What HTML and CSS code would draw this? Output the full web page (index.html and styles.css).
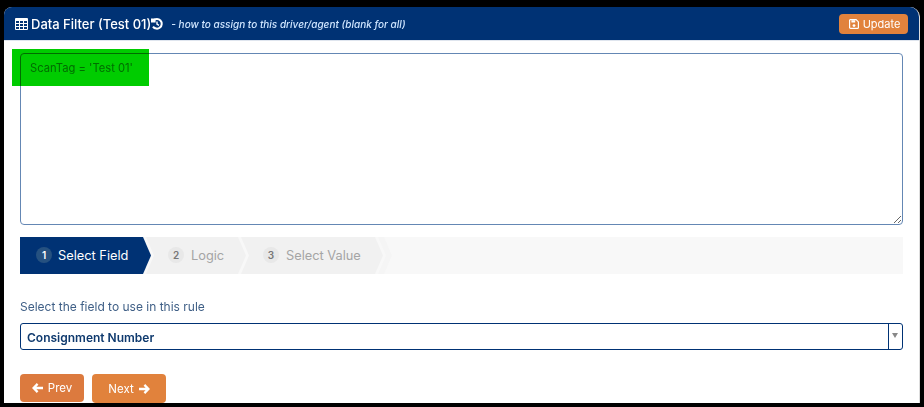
FILE: index.html
```html
<!DOCTYPE html>
<html lang="en">
<head>
    <meta charset="UTF-8">
    <meta name="viewport" content="width=device-width, initial-scale=1.0">
    <title>Data Filter</title>
    <link rel="stylesheet" href="styles.css">
</head>
<body>
    <div class="panel">
        <header class="panel-head">
            <div class="panel-title">
                <svg class="icon-table" width="13" height="12" viewBox="0 0 13 12">
                    <path fill="#fff" fill-rule="evenodd" d="M1 0h11a1 1 0 0 1 1 1v10a1 1 0 0 1-1 1H1a1 1 0 0 1-1-1V1a1 1 0 0 1 1-1zM1 3v2h3V3zm4 0v2h3V3zm4 0v2h3V3zM1 6v2h3V6zm4 0v2h3V6zm4 0v2h3V6zM1 9v2h3V9zm4 0v2h3V9zm4 0v2h3V9z"/>
                </svg>
                <span class="title-text">Data Filter (Test 01)</span>
                <svg class="icon-history" width="12" height="12" viewBox="0 0 12 12">
                    <path fill="none" stroke="#fff" stroke-width="2" d="M2.4 2.6A4.8 4.8 0 1 1 2 8.6"/>
                    <path fill="#fff" d="M0 0.4 L4.6 0.4 L4.6 4.6 L0 4.6z"/>
                    <path fill="none" stroke="#fff" stroke-width="1.4" d="M6 3.4V6.2L8 7.4"/>
                </svg>
                <span class="title-hint">- how to assign to this driver/agent (blank for all)</span>
            </div>
            <button class="btn btn-small">
                <svg width="10" height="10" viewBox="0 0 10 10">
                    <path fill="none" stroke="#fff" stroke-width="1.2" d="M1.2 0.6h5.9L9.4 2.9V8.4a1 1 0 0 1-1 1H1.6a1 1 0 0 1-1-1V1.2z"/>
                    <path fill="#fff" d="M2.4 1.2h3.8v2.4H2.4z"/>
                    <circle cx="5" cy="6.6" r="1.4" fill="#fff"/>
                </svg>
                Update
            </button>
        </header>

        <div class="panel-body">
            <div class="filter-box">
                <textarea class="filter-text" spellcheck="false">ScanTag = 'Test 01'</textarea>
                <div class="redact"></div>
            </div>

            <div class="steps">
                <div class="step step-1 active"><span class="num">1</span>Select Field</div>
                <div class="step step-2"><span class="num">2</span>Logic</div>
                <div class="step step-3"><span class="num">3</span>Select Value</div>
                <div class="step step-rest"></div>
            </div>

            <label class="field-label">Select the field to use in this rule</label>
            <div class="select">
                <span class="select-value">Consignment Number</span>
                <span class="select-arrow"></span>
            </div>

            <div class="actions">
                <button class="btn btn-prev">
                    <svg width="11" height="10" viewBox="0 0 11 10"><path fill="none" stroke="#fff" stroke-width="2.3" d="M5.6 0.9L1.6 5l4 4.1M2 5h9"/></svg>
                    Prev
                </button>
                <button class="btn btn-next">
                    Next
                    <svg width="11" height="10" viewBox="0 0 11 10"><path fill="none" stroke="#fff" stroke-width="2.3" d="M5.4 0.9L9.4 5l-4 4.1M9 5H0"/></svg>
                </button>
            </div>
        </div>
    </div>
</body>
</html>
```

FILE: styles.css
```css
html, body {
    height: 100%;
}

body {
    margin: 0;
    background-color: #000;
    font-family: Inter, "Liberation Sans", sans-serif;
    overflow: hidden;
    box-sizing: border-box;
    padding: 7px 4px 4px 4px;
}

.panel {
    height: 396px;
    background-color: #fff;
    border-right: 1px solid #ddd;
    border-radius: 8px 10px 0 0;
    overflow: hidden;
}

.panel-head {
    height: 33px;
    background-color: #003274;
    border-bottom: 1px solid #dfe5ee;
    display: flex;
    justify-content: space-between;
    align-items: center;
    padding: 0 11px 0 11px;
    color: #fff;
}

.panel-title {
    display: flex;
    align-items: center;
}

.icon-table {
    margin-right: 3px;
}

.title-text {
    font-size: 13px;
    font-weight: 500;
}

.icon-history {
    margin-right: 8px;
}

.title-hint {
    font-size: 10px;
    font-style: italic;
    font-weight: 500;
    color: #cfe6ff;
}

.btn {
    border: none;
    border-radius: 4px;
    background-color: #e1823c;
    color: #fff;
    font-family: inherit;
    font-size: 11px;
    font-weight: 400;
    display: flex;
    align-items: center;
    justify-content: center;
    gap: 5px;
    padding: 0;
}

.btn-small {
    width: 69px;
    height: 20px;
    gap: 4px;
    padding-left: 2px;
}

.panel-body {
    padding: 12px 16px 0 16px;
}

.filter-box {
    position: relative;
    height: 172px;
}

.filter-text {
    display: block;
    box-sizing: border-box;
    width: 100%;
    height: 172px;
    margin: 0;
    padding: 7px 9px;
    border: 1px solid #6487b4;
    border-radius: 4px;
    color: #888;
    font-family: inherit;
    font-size: 11.2px;
    outline: none;
}

/* green marker laid over the box, border and text show through */
.redact {
    position: absolute;
    left: -8px;
    top: -4px;
    width: 137px;
    height: 37px;
    background-color: #00cc00;
    mix-blend-mode: multiply;
}

.steps {
    display: flex;
    height: 37px;
    margin-top: 12px;
    background-color: #f8f8f8;
}

.step {
    display: flex;
    align-items: center;
    font-size: 12.8px;
    padding-bottom: 1px;
    background-color: #f1f1f1;
    color: #a5a5a5;
    margin-right: -5px;
    clip-path: polygon(0 0, calc(100% - 8px) 0, 100% 50%, calc(100% - 8px) 100%, 0 100%, 8px 50%);
}

.step-1 {
    width: 131px;
    padding-left: 16px;
    box-sizing: border-box;
    clip-path: polygon(0 0, calc(100% - 8px) 0, 100% 50%, calc(100% - 8px) 100%, 0 100%);
}

.step-2 {
    width: 100px;
    padding-left: 22px;
    box-sizing: border-box;
}

.step-3 {
    width: 142px;
    padding-left: 22px;
    box-sizing: border-box;
}

.step-rest {
    width: 14px;
    background-color: #f5f5f5;
}

.step.active {
    background-color: #003274;
    color: #fff;
}

.num {
    width: 16px;
    height: 16px;
    border-radius: 50%;
    background-color: #e8e8e8;
    color: #777;
    font-size: 10px;
    font-weight: 600;
    display: flex;
    align-items: center;
    justify-content: center;
    margin-right: 7px;
}

.active .num {
    background-color: #255180;
    color: #fff;
    margin-right: 6px;
}

.field-label {
    display: block;
    margin-top: 25px;
    font-size: 12px;
    line-height: 16px;
    color: #3f5f86;
}

.select {
    box-sizing: border-box;
    height: 27px;
    margin-top: 8px;
    border: 1px solid #003274;
    border-radius: 3px;
    display: flex;
    justify-content: space-between;
    align-items: stretch;
}

.select-value {
    padding-left: 6px;
    font-size: 12px;
    font-weight: 600;
    line-height: 27px;
    color: #0f3a6e;
}

.select-arrow {
    width: 13px;
    border-left: 1px solid #003274;
    position: relative;
}

.select-arrow::after {
    content: "";
    position: absolute;
    left: 3px;
    top: 9px;
    border-left: 3px solid transparent;
    border-right: 3px solid transparent;
    border-top: 5px solid #888;
}

.actions {
    display: flex;
    gap: 8px;
    margin-top: 24px;
}

.btn-prev {
    width: 64px;
    height: 28px;
    background-color: #dc7a3e;
    font-size: 11.5px;
}

.btn-next {
    width: 74px;
    height: 29px;
    font-size: 11.5px;
}
```
